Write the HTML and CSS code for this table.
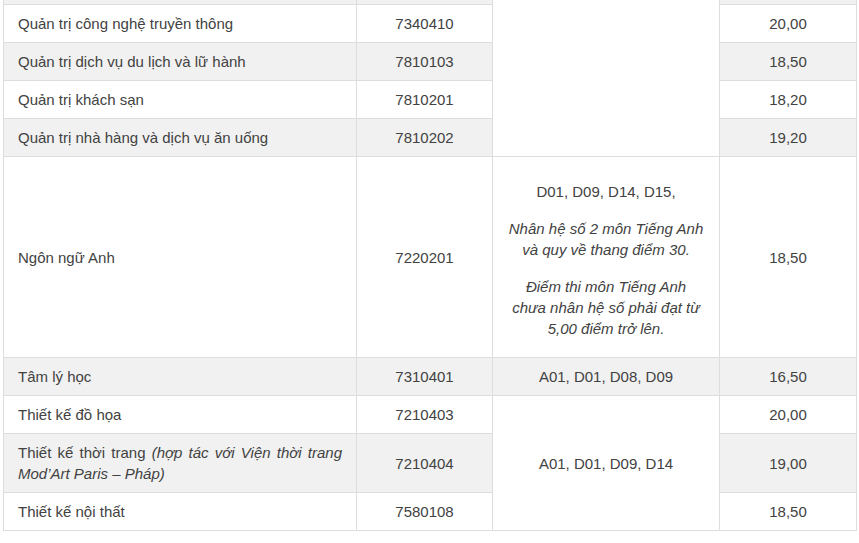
FILE: index.html
```html
<!DOCTYPE html>
<html lang="vi">
<head>
<meta charset="utf-8">
<title>Điểm chuẩn</title>
<link rel="stylesheet" href="styles.css">
</head>
<body>
<table class="scores">
  <colgroup>
    <col class="c-name">
    <col class="c-code">
    <col class="c-combo">
    <col class="c-score">
  </colgroup>
  <tbody>
    <tr class="alt">
      <td class="name">&nbsp;</td>
      <td>&nbsp;</td>
      <td class="plain" rowspan="5"></td>
      <td>&nbsp;</td>
    </tr>
    <tr>
      <td class="name">Quản trị công nghệ truyền thông</td>
      <td>7340410</td>
      <td>20,00</td>
    </tr>
    <tr class="alt">
      <td class="name">Quản trị dịch vụ du lịch và lữ hành</td>
      <td>7810103</td>
      <td>18,50</td>
    </tr>
    <tr>
      <td class="name">Quản trị khách sạn</td>
      <td>7810201</td>
      <td>18,20</td>
    </tr>
    <tr class="alt">
      <td class="name">Quản trị nhà hàng và dịch vụ ăn uống</td>
      <td>7810202</td>
      <td>19,20</td>
    </tr>
    <tr>
      <td class="name">Ngôn ngữ Anh</td>
      <td>7220201</td>
      <td class="notes">
        <p>D01, D09, D14, D15,</p>
        <p><em>Nhân hệ số 2 môn Tiếng Anh và quy về thang điểm 30.</em></p>
        <p><em>Điểm thi môn Tiếng Anh chưa nhân hệ số phải đạt từ 5,00 điểm trở lên.</em></p>
      </td>
      <td>18,50</td>
    </tr>
    <tr class="alt">
      <td class="name">Tâm lý học</td>
      <td>7310401</td>
      <td>A01, D01, D08, D09</td>
      <td>16,50</td>
    </tr>
    <tr>
      <td class="name">Thiết kế đồ họa</td>
      <td>7210403</td>
      <td rowspan="3">A01, D01, D09, D14</td>
      <td>20,00</td>
    </tr>
    <tr class="alt">
      <td class="name">Thiết kế thời trang <em>(hợp tác với Viện thời trang Mod’Art Paris – Pháp)</em></td>
      <td>7210404</td>
      <td>19,00</td>
    </tr>
    <tr>
      <td class="name">Thiết kế nội thất</td>
      <td>7580108</td>
      <td>18,50</td>
    </tr>
  </tbody>
</table>
</body>
</html>
```

FILE: styles.css
```css
html, body {
  margin: 0;
  padding: 0;
  background: #fff;
}

body {
  font-family: "Liberation Sans", Arial, sans-serif;
  font-size: 15px;
  line-height: 21px;
  color: #424242;
}

.scores {
  border-collapse: collapse;
  table-layout: fixed;
  width: 853px;
  margin: -34px 0 0 3px;
}

.c-name { width: 353px; }
.c-code { width: 136px; }
.c-combo { width: 227px; }
.c-score { width: 137px; }

.scores td {
  border: 1px solid #dddddd;
  padding: 8px 14px;
  text-align: center;
  vertical-align: middle;
  background: transparent;
}

.scores tr.alt td {
  background: #f1f1f1;
}

.scores tr.alt td.plain {
  background: #fff;
}

.scores td.name {
  text-align: justify;
}

.notes p {
  margin: 16px 0;
}

.notes p:last-child {
  margin-bottom: 10px;
}
```
